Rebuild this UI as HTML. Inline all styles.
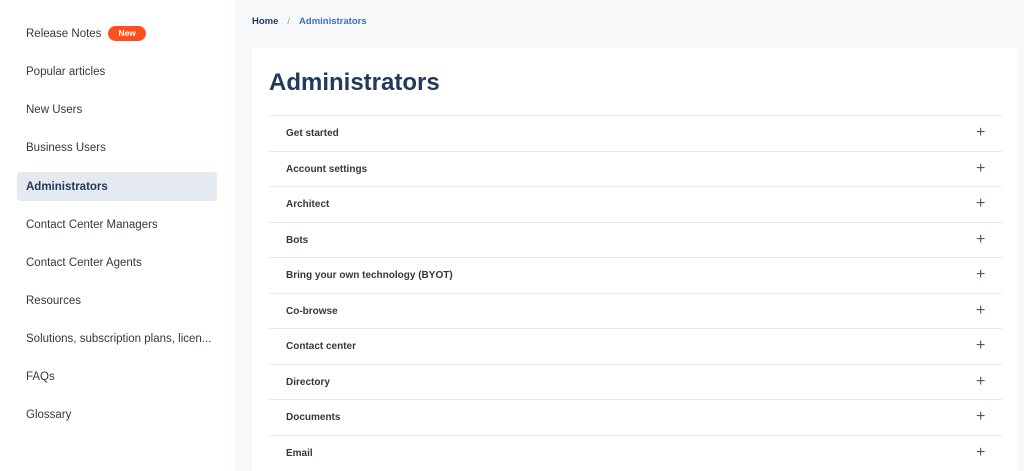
<!DOCTYPE html>
<html style="overflow:hidden;height:471px"><head><style>
body{margin:0;width:1024px;height:471px;overflow:hidden;font-family:"Liberation Sans",Arial,sans-serif;background:#f7f8f9;position:relative}
.side{position:absolute;left:0;top:0;width:235px;height:471px;background:#fff}
.si{position:absolute;left:26px;font-size:11.5px;color:#33383f;line-height:16px;margin-top:1px}
.act{position:absolute;left:17px;top:172px;width:200px;height:29px;background:#e5e9f0;border-radius:3px}
.new{display:inline-block;background:#ff4f1f;color:#fff;font-size:8.5px;font-weight:bold;border-radius:8px;padding:1px 10px;margin-left:7px;vertical-align:1px;line-height:13px}
.bc{position:absolute;left:252px;top:16px;font-size:9.5px;font-weight:bold;color:#23395d}
.bc span{color:#8a96a6;font-weight:normal;margin:0 9px}
.bc b{color:#3b6fc4}
.card{position:absolute;left:252px;top:48px;width:766px;height:423px;background:#fff}
h1{position:absolute;left:269px;top:69px;margin:0;font-size:24px;font-weight:bold;color:#23395d}
.row{position:absolute;left:269px;width:733px;height:35px;border-top:1px solid #e6e9ee;font-size:10px;font-weight:bold;color:#33383f}
.row .t{position:absolute;left:17px;top:12px}
.row .p{position:absolute;left:707px;top:8px;font-size:16px;font-weight:normal;color:#4b5a72}
</style></head><body>
<div class="side">
<div class="act"></div>
<div class="si" style="top:25px">Release Notes<span class="new">New</span></div>
<div class="si" style="top:63px">Popular articles</div>
<div class="si" style="top:101px">New Users</div>
<div class="si" style="top:139px">Business Users</div>
<div class="si" style="top:178px;font-weight:bold;color:#23395d">Administrators</div>
<div class="si" style="top:216px">Contact Center Managers</div>
<div class="si" style="top:254px">Contact Center Agents</div>
<div class="si" style="top:292px">Resources</div>
<div class="si" style="top:330px">Solutions, subscription plans, licen...</div>
<div class="si" style="top:368px">FAQs</div>
<div class="si" style="top:406px">Glossary</div>
</div>
<div class="bc">Home<span>/</span><b>Administrators</b></div>
<div class="card"></div>
<h1>Administrators</h1>
<div class="row" style="top:115px"><span class="t">Get started</span><span class="p">+</span></div>
<div class="row" style="top:151px"><span class="t">Account settings</span><span class="p">+</span></div>
<div class="row" style="top:186px"><span class="t">Architect</span><span class="p">+</span></div>
<div class="row" style="top:222px"><span class="t">Bots</span><span class="p">+</span></div>
<div class="row" style="top:257px"><span class="t">Bring your own technology (BYOT)</span><span class="p">+</span></div>
<div class="row" style="top:293px"><span class="t">Co-browse</span><span class="p">+</span></div>
<div class="row" style="top:328px"><span class="t">Contact center</span><span class="p">+</span></div>
<div class="row" style="top:364px"><span class="t">Directory</span><span class="p">+</span></div>
<div class="row" style="top:399px"><span class="t">Documents</span><span class="p">+</span></div>
<div class="row" style="top:435px;height:35px;border-bottom:1px solid #e6e9ee"><span class="t">Email</span><span class="p">+</span></div>
</body></html>
